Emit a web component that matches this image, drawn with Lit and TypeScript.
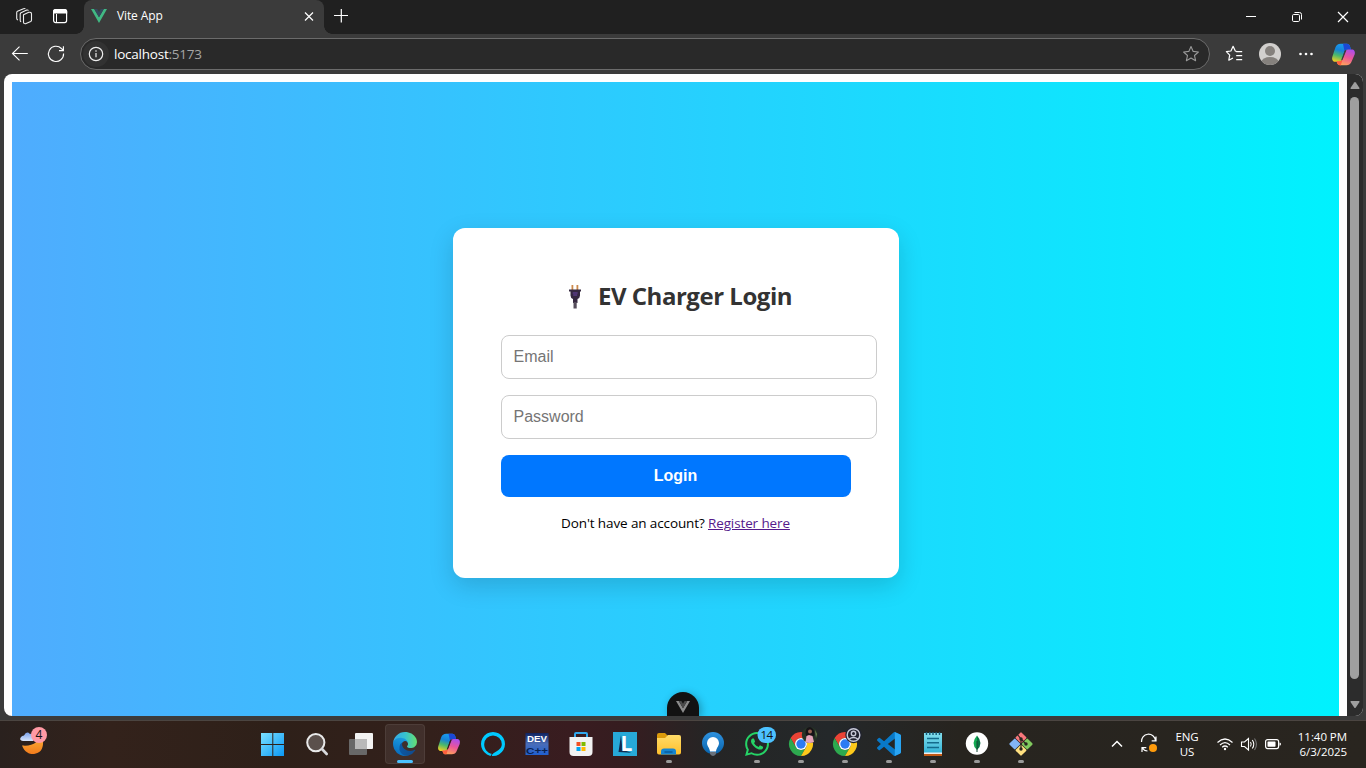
import { LitElement, html, css } from "lit";
import { customElement } from "lit/decorators.js";

const copilot = (size: number) => html`
  <svg width=${size} height=${size} viewBox="0 0 24 24"><g mask="url(#cpHole)">
    <path d="M9.2 1.800h6.100c1.500 0 2.500.9 2.900 2.300l.9 3h-3.300c-1.700 0-2.600.8-3.100 2.500l-2 6.900c-.5 1.700-1.400 2.500-3 2.500H4.200C1.700 19 .5 17 1.300 14.200L4.100 5.600C5 3 6.800 1.800 9.200 1.800z" fill="url(#cpA)"/>
    <path d="M11.500 1.800h3.800c1.500 0 2.500.9 2.900 2.300l.9 3h-3.300c-1.400 0-2.300.6-2.800 1.700z" fill="#1b48d6"/>
    <path d="M14.800 22.200H8.700c-1.500 0-2.500-.9-2.900-2.300l-.5-1.500h2.900c1.700 0 2.600-.8 3.100-2.500l2.200-6.300c.5-1.700 1.400-2.500 3-2.500h3.300c2.500 0 3.700 2 2.900 4.800l-2.800 6.500c-.9 2.600-2.700 3.800-5.100 3.800z" fill="url(#cpB)"/>
    <path d="M11 17l-1.500 5.200h-.8c-1.500 0-2.500-.9-2.900-2.300l-.4-1.500h2.800c1.200 0 2.100-.5 2.800-1.400z" fill="#ff5f3c"/>
  </g></svg>`;

const chrome = html`
  <svg width="24" height="24" viewBox="8 12 24 24">
    <path d="M9.600 18A12 12 0 0 1 30.400 18H20A6 6 0 0 0 14.800 27z" fill="#ea4335"/>
    <path d="M9.600 18A12 12 0 0 0 20 36L25.200 27A6 6 0 0 1 14.800 27z" fill="#2da94f"/>
    <path d="M20 36A12 12 0 0 0 30.400 18H20A6 6 0 0 1 25.200 27z" fill="#fdc91b"/>
    <circle cx="20" cy="24" r="6" fill="#fff"/><circle cx="20" cy="24" r="4.700" fill="#2b7bf3"/>
  </svg>`;

@customElement("app-root")
export class AppRoot extends LitElement {
  static styles = css`
    :host { display: block; width: 1366px; height: 768px; overflow: hidden; font-family: "Open Sans", "Noto Sans", sans-serif; }
    * { box-sizing: border-box; }
    svg { display: block; flex: none; overflow: visible; }
    .defs { position: absolute; width: 0; height: 0; }
    .window { display: flex; flex-direction: column; height: 720px; background: #3b3b3b; }
    .tabs { display: flex; height: 34px; background: #202020; color: #fff; }
    .lead { width: 84px; background: radial-gradient(circle at 0 0, #202020 7.500px, #3b3b3b 8px) right bottom / 8px 8px no-repeat; }
    .tail { width: 34px; background: radial-gradient(circle at 100% 0, #202020 7.500px, #3b3b3b 8px) left bottom / 8px 8px no-repeat; padding: 9px 0 0 10px; }
    .tools { display: flex; gap: 20px; padding: 8px 0 0 16px; }
    .tab { display: flex; align-items: center; width: 240px; height: 34px; border-radius: 8px 8px 0 0; background: #3b3b3b; padding: 0 10px 2px 7px; }
    .tab-title { flex: 1; margin-left: 10px; padding-bottom: 1px; font-size: 12px; letter-spacing: -0.120px; }
    .win-buttons { display: flex; margin-left: auto; }
    .win-buttons svg { width: 46px; height: 34px; }
    .toolbar { display: flex; align-items: center; height: 40px; padding-left: 10px; }
    .nav { display: flex; gap: 16px; width: 70px; }
    .address { display: flex; align-items: center; width: 1130px; height: 32px; border: 1px solid #6b6b6b; border-radius: 16px; background: #292929; padding: 0 10px 0 2px; }
    .info { display: flex; align-items: center; justify-content: center; width: 26px; height: 26px; border-radius: 13px; background: #323232; }
    .url { flex: 1; margin-left: 5px; font-size: 13.500px; letter-spacing: -0.230px; color: #fff; }
    .port { color: #a5a5a5; }
    .actions { display: flex; align-items: center; gap: 14px; margin-left: 13px; }
    .content { display: flex; height: 642px; margin: 0 3px 0 4px; border-radius: 8px; overflow: hidden; background: #fff; }
    .page { position: relative; width: 1343px; padding: 8px 8px 0; }
    .gradient { display: flex; justify-content: center; height: 634px; padding-top: 146px; background: linear-gradient(to right, #4facfe, #00f2fe); }
    .card { width: 446px; height: 350px; padding: 48px; border-radius: 12px; background: #fff; box-shadow: 0 8px 24px rgba(0, 0, 0, 0.15); }
    .heading { display: flex; align-items: center; justify-content: center; gap: 13px; height: 42px; margin: 0 0 17px; padding-left: 6px; font-size: 24px; font-weight: 700; letter-spacing: -0.470px; white-space: nowrap; color: #333; }
    .heading-text { padding-bottom: 3px; }
    .field { display: block; width: 376px; height: 44px; margin: 0 0 16px; padding: 0 12px; border: 1px solid #ccc; border-radius: 8px; background: #fff; font: 16px "Liberation Sans", sans-serif; outline: none; }
    .field::placeholder { color: #757575; opacity: 1; }
    .login { display: block; width: 350px; height: 42px; padding: 0; border: 0; border-radius: 8px; background: #0077ff; color: #fff; font: bold 16px "Liberation Sans", sans-serif; }
    .register { margin: 16px 0 0; text-align: center; font-size: 13.500px; line-height: 20px; letter-spacing: -0.120px; white-space: nowrap; color: #000; }
    .link { color: #551a8b; text-decoration: underline; }
    .devtools { position: absolute; left: 663px; bottom: 0; display: flex; justify-content: center; width: 32px; height: 24px; padding-top: 9px; border-radius: 16px 16px 0 0; background: #121212; box-shadow: 2px 2px 8px rgba(0, 0, 0, 0.3); }
    .scroll { display: flex; flex-direction: column; align-items: center; justify-content: space-between; width: 16px; padding: 8px 1px 8px 0; background: #2c2c2c; }
    .thumb { width: 9px; height: 582px; border-radius: 5px; background: #9f9f9f; margin: 0 0 14px; }
    .taskbar { display: flex; height: 48px; border-top: 1px solid #4b4541; background: linear-gradient(90deg, #2a211e 0, #33221b 110px, #2e2019 280px, #33201b 430px, #391c20 570px, #351d20 630px, #252525 710px, #24282a 830px, #27241f 960px, #29251f 1366px); color: #fff; }
    .weather { width: 253px; margin-top: -1px; padding-left: 20px; }
    .apps { display: flex; gap: 4px; margin-top: -1px; }
    .app { display: flex; align-items: center; justify-content: center; width: 40px; height: 48px; }
    .active { height: 40px; margin-top: 4px; border-radius: 4px; border: 1px solid #ffffff12; background: #ffffff12; }
    .active svg { margin: -5px -1px; }
    .stack { display: grid; width: 40px; height: 48px; place-items: center; }
    .stack > svg { grid-area: 1 / 1; }
    .tray { display: flex; align-items: center; flex: 1; justify-content: flex-end; padding: 0 19px 1px 0; font-size: 11.500px; line-height: 15px; letter-spacing: -0.050px; }
    .lang { width: 30px; margin: 0 14px 0 14px; text-align: center; letter-spacing: -0.200px; }
    .status { display: flex; gap: 6px; }
    .clock { width: 60px; margin-left: 5px; text-align: right; white-space: nowrap; }
    .chev { margin-right: 17px; }
    .mini { font-family: "Open Sans", sans-serif; }
    .tight { font-family: "Liberation Sans", sans-serif; font-weight: 700; }
  `;

  private icon(body: unknown) {
    return html`<div class="app">${body}</div>`;
  }

  render() {
    return html`
      <svg class="defs"><defs>
        <mask id="cpHole" maskUnits="userSpaceOnUse" x="0" y="0" width="24" height="24"><path d="M0 0h24v24H0z" fill="#fff"/><path d="M13.300 7.800h1.500l-3.500 8.700q-.4 1-1.600 1z" fill="#000"/></mask>
        <linearGradient id="cpA" x1="0.500" y1="0" x2="0.200" y2="1"><stop offset="0" stop-color="#1a9cf0"/><stop offset=".35" stop-color="#1684d8"/><stop offset=".65" stop-color="#4cb96b"/><stop offset="1" stop-color="#f5cf21"/></linearGradient>
        <linearGradient id="cpB" x1="0.800" y1="0" x2="0.400" y2="1"><stop offset="0" stop-color="#a94df0"/><stop offset=".5" stop-color="#ea5599"/><stop offset="1" stop-color="#ffa05c"/></linearGradient>
        <linearGradient id="win" x1="0" y1="0" x2="1" y2="1"><stop offset="0" stop-color="#7be0ff"/><stop offset="1" stop-color="#0a98f5"/></linearGradient>
        <linearGradient id="edA"><stop offset="0" stop-color="#0c59a4"/><stop offset="1" stop-color="#114a8b"/></linearGradient>
        <linearGradient id="edB" x1="0.600" y1="0" x2="0.300" y2="1"><stop offset="0" stop-color="#1b9de2"/><stop offset="1" stop-color="#0669bb"/></linearGradient>
        <linearGradient id="edC"><stop offset="0" stop-color="#35a9e8"/><stop offset=".5" stop-color="#36c1d0"/><stop offset="1" stop-color="#66e070"/></linearGradient>
        <linearGradient id="moon" x2="0" y2="1"><stop offset="0" stop-color="#ffbd3c"/><stop offset="1" stop-color="#f27b1c"/></linearGradient>
        <linearGradient id="cloud" x2="0" y2="1"><stop offset="0" stop-color="#7ba2ec"/><stop offset="1" stop-color="#d9e6fb"/></linearGradient>
        <linearGradient id="folder" x2="0" y2="1"><stop offset="0" stop-color="#ffdb69"/><stop offset="1" stop-color="#ffbf2c"/></linearGradient>
        <linearGradient id="bulb" x2="0" y2="1"><stop offset="0" stop-color="#2f92df"/><stop offset="1" stop-color="#0864ad"/></linearGradient>
        <linearGradient id="note" x2="0" y2="1"><stop offset="0" stop-color="#83deed"/><stop offset="1" stop-color="#35b5d8"/></linearGradient>
        <linearGradient id="dev" x2="0" y2="1"><stop offset="0" stop-color="#10235f"/><stop offset=".5" stop-color="#4a6db8"/><stop offset="1" stop-color="#1f5fd0"/></linearGradient>
      </defs></svg>

      <div class="window">
        <div class="tabs">
          <div class="lead"><div class="tools">
            <svg width="16" height="16" viewBox="0 0 16 16" fill="none" stroke="#eee" stroke-width="1.100" stroke-linejoin="round"><path d="M7.500 6.700l5.300-2.400q2.700-.4 2.700 1.700v6q0 1-.8 1.400l-5.200 2.300q-2 .2-2-1.700zM5.200 13.800q-1-.3-1-1.600V6.200q0-1 .8-1.500l5.700-2.600q1.300-.3 1.800.4M2 12q-1.300-.3-1.300-1.700V4.700q0-1 .8-1.400L7.500.7q1.300-.4 1.900.3"/></svg>
            <svg width="16" height="16" viewBox="0 0 16 16"><rect x="1.600" y="1.600" width="13" height="13" rx="2" fill="none" stroke="#fff" stroke-width="1.200"/><path d="M1 5.500V3.500Q1 1 3.500 1h9Q15.200 1 15.200 3.500v2zM4 5v9.500h1V5z" fill="#fff"/></svg>
          </div></div>
          <div class="tab">
            <svg width="16" height="14" viewBox="0 0 16 14"><path d="M0 0h3.200L8 8.300 12.800 0H16L8 14z" fill="#41b883"/><path d="M3.200 0h3L8 3.100 9.800 0h3L8 8.300z" fill="#35495e"/></svg>
            <span class="tab-title">Vite App</span>
            <svg width="10" height="10" viewBox="0 0 10 10" stroke="#fff" stroke-width="1.200"><path d="M1 1.500l8 8M9 1.500l-8 8"/></svg>
          </div>
          <div class="tail"><svg width="14" height="14" viewBox="0 0 14 14" stroke="#fff" stroke-width="1.200"><path d="M0 6.500h14M7.300 0v13.500"/></svg></div>
          <div class="win-buttons">
            <svg viewBox="0 0 46 34"><path d="M18 16.500h10" stroke="#fff"/></svg>
            <svg viewBox="0 0 46 34" fill="none" stroke="#fff"><rect x="18.500" y="14.500" width="7" height="7" rx="1.200"/><path d="M20.500 12.500h5q2 0 2 2v5"/></svg>
            <svg viewBox="0 0 46 34" stroke="#fff" stroke-width="1.200"><path d="M18 12l10 10M28 12L18 22"/></svg>
          </div>
        </div>

        <div class="toolbar">
          <div class="nav">
            <svg width="20" height="20" viewBox="0 0 20 20" fill="none" stroke="#fff" stroke-width="1.100"><path d="M17.800 9.500H2.500M9.500 2.700L2.500 9.500l7 6.800"/></svg>
            <svg width="20" height="20" viewBox="0 0 20 20" fill="none" stroke="#fff" stroke-width="1.100"><path d="M17.600 9.500A7.600 7.600 0 1 1 15.400 4.500L17.400 6.400M17.400 2.200V6.600H13"/></svg>
          </div>
          <div class="address">
            <span class="info"><svg width="16" height="16" viewBox="0 0 16 16"><circle cx="8" cy="8" r="6.700" fill="none" stroke="#eee" stroke-width="1.200"/><path d="M8 7v4.200" stroke="#eee" stroke-width="1.200"/><circle cx="8" cy="5" r=".8" fill="#eee"/></svg></span>
            <span class="url">localhost<span class="port">:5173</span></span>
            <svg width="16" height="16" viewBox="0 0 16 16" fill="none" stroke="#999" stroke-width="1.100" stroke-linejoin="round"><path d="M8 .6l2.200 4.800 5.200.6-3.900 3.500 1.100 5.200L8 12.100l-4.600 2.600 1.100-5.200L.6 6l5.200-.6z"/></svg>
          </div>
          <div class="actions">
            <svg width="22" height="20" viewBox="0 0 22 20" fill="none" stroke="#fff" stroke-width="1.200" stroke-linejoin="round"><path d="M13.500 7.500L12.300 7 10.100 2.300 7.900 7 3.400 7.700 6.700 11.100 5.800 16.200 10 14M13.200 7.600h6M13.200 11.600h6M13.200 15.600h6"/></svg>
            <svg width="22" height="22" viewBox="0 0 22 22"><circle cx="11" cy="11" r="11" fill="#d2d0ce"/><clipPath id="av"><circle cx="11" cy="11" r="11"/></clipPath><circle cx="11" cy="8" r="5" fill="#85817d"/><ellipse cx="11" cy="19" rx="8.500" ry="5" fill="#85817d" clip-path="url(#av)"/></svg>
            <svg width="22" height="20" viewBox="0 0 22 20" fill="#fff"><circle cx="5.500" cy="10" r="1.300"/><circle cx="11" cy="10" r="1.300"/><circle cx="16.500" cy="10" r="1.300"/></svg>
            ${copilot(25)}
          </div>
        </div>

        <div class="content">
          <div class="page">
            <div class="gradient">
              <div class="card">
                <h2 class="heading">
                  <svg width="20" height="24" viewBox="0 0 20 24"><path d="M6.500 0h1.800v5H6.500zM11.500 0h1.800v5h-1.800z" fill="#cc8a4d"/><path d="M4 4.500h12v2h-1v4q0 2.500-2.500 3.500v4H8v-4q-2.500-1-2.500-3.500v-4H4z" fill="#35283f"/><path d="M8.500 17h3.200v6.500H8.500z" fill="#554d5b"/><path d="M7.700 8h5M8.200 10h4" stroke="#6c45a8"/></svg>
                  <span class="heading-text">EV Charger Login</span>
                </h2>
                <input class="field" type="email" placeholder="Email">
                <input class="field" type="password" placeholder="Password">
                <button class="login">Login</button>
                <p class="register">Don't have an account? <a class="link">Register here</a></p>
              </div>
            </div>
            <div class="devtools"><svg width="14" height="12" viewBox="0 0 14 12"><path d="M0 0h2.800L7 7.200 11.200 0H14L7 12z" fill="#8c8c8c"/><path d="M2.800 0h2.600L7 2.700 8.600 0h2.600L7 7.200z" fill="#4b4b4b"/></svg></div>
          </div>
          <div class="scroll">
            <svg width="10" height="7" viewBox="0 0 10 7"><path d="M4.200.5q.8-1 1.600 0L9.500 6q.3 1-.7 1H1.200q-1 0-.7-1z" fill="#9f9f9f"/></svg>
            <div class="thumb"></div>
            <svg width="10" height="7" viewBox="0 0 10 7"><path d="M4.200 6.500q.8 1 1.600 0L9.500 1q.3-1-.7-1H1.200q-1 0-.7 1z" fill="#9f9f9f"/></svg>
          </div>
        </div>
      </div>

      <div class="taskbar">
        <div class="weather"><svg width="30" height="48" viewBox="0 0 30 48">
          <path d="M20 13c0 9-7 13.500-18 12.500C5 34 12 34.500 15 33.800 22 32.500 23.500 27 23 20z" fill="url(#moon)"/><path d="M3 21q-4.500-1-2-4 1-1.500 3-1.500 2.500-5 6-1.500 4-1 4 3.500l-1 3.500z" fill="url(#cloud)"/>
          <circle cx="19" cy="15" r="8" fill="#ff99a4"/><text class="mini" x="19" y="19.200" text-anchor="middle" font-size="12" fill="#111">4</text></svg></div>
        <div class="apps">
          ${this.icon(html`<svg width="40" height="48" viewBox="0 0 40 48"><path d="M8 13h11.300v11H8zM20.300 13H31v11H20.300zM8 25h11.300v11H8zM20.300 25H31v11H20.300z" fill="url(#win)"/></svg>`)}
          ${this.icon(html`<svg width="40" height="48" viewBox="0 0 40 48"><circle cx="18.800" cy="22.600" r="8.600" fill="#5b504c" stroke="#e9e9e9" stroke-width="2"/><path d="M25 29l4.700 5" stroke="#d9dadd" stroke-width="2.600" stroke-linecap="round"/></svg>`)}
          ${this.icon(html`<svg width="40" height="48" viewBox="0 0 40 48"><rect x="14" y="13" width="18" height="16" rx="1" fill="#f3f3f3"/><rect x="8" y="19" width="18" height="16" rx="1" fill="#686868"/><path d="M14 19h12v10H14z" fill="#b9b9b9"/></svg>`)}
          <div class="app active"><svg width="40" height="48" viewBox="0 0 40 48"><g transform="translate(8 12) scale(.09375)">
            <path d="M231 190.500c-3.400 1.800-6.900 3.400-10.500 4.700a101.700 101.700 0 0 1-35.900 6.500c-47.300 0-88.500-32.500-88.500-74.300a31.500 31.500 0 0 1 16.400-27.300c-42.800 1.800-53.800 46.400-53.800 72.500 0 74 68.100 81.400 82.800 81.400 7.900 0 19.800-2.300 27-4.600l1.300-.4a128.300 128.300 0 0 0 66.600-52.800 4 4 0 0 0-5.400-5.700z" fill="url(#edA)"/>
            <path d="M105.700 241.400a79.200 79.200 0 0 1-22.700-21.300 80.700 80.700 0 0 1 29.500-120c3.200-1.500 8.500-4.100 15.600-4a32.400 32.400 0 0 1 25.700 13 31.900 31.900 0 0 1 6.300 18.700c0-.2 24.500-79.600-80-79.600-43.900 0-80 41.600-80 78.200a130.200 130.200 0 0 0 12.100 56 128 128 0 0 0 156.400 67 75.500 75.500 0 0 1-62.800-8z" fill="url(#edB)"/>
            <path d="M152.300 148.900c-.9 1-3.400 2.500-3.400 5.600 0 2.600 1.700 5.200 4.800 7.300 14.300 10 41.400 8.600 41.500 8.600a59.600 59.600 0 0 0 30.300-8.300 61.400 61.400 0 0 0 30.400-52.900c.3-22.400-8-37.300-11.300-43.900C223.500 23.900 177.700 0 128 0A128 128 0 0 0 0 126.200c.5-36.500 36.800-66 80-66 3.500 0 23.500.3 42 10a72.600 72.600 0 0 1 30.900 29.300c6.100 10.600 7.200 24.100 7.200 29.500s-2.700 13.300-7.800 19.900z" fill="url(#edC)"/></g>
            <rect x="12" y="40" width="16" height="3" rx="1.500" fill="#4cc2ff"/></svg></div>
          ${this.icon(copilot(24))}
          ${this.icon(html`<svg width="40" height="48" viewBox="0 0 40 48"><path fill-rule="evenodd" d="M20 12a12 12 0 1 1-.01 0zM19.300 34c-5.400-1.200-8.100-5.300-8.100-9.800a8.800 8.800 0 0 1 17.600 0c0 4.800-5.400 7.200-9.500 9.800z" fill="#00caff"/><path d="M18.800 36.500q-.3-2 1.500-3l-1-.8-1.500 3z" fill="#351d1e"/></svg>`)}
          ${this.icon(html`<svg width="40" height="48" viewBox="0 0 40 48"><rect x="8.500" y="13" width="23" height="22" fill="url(#dev)"/><text class="tight" x="10" y="22" font-size="9.500" textLength="20" lengthAdjust="spacingAndGlyphs" fill="#fff">DEV</text><text class="tight" x="9" y="33.500" font-size="9.500" textLength="22" lengthAdjust="spacingAndGlyphs" fill="#08214f">C++</text></svg>`)}
          ${this.icon(html`<svg width="40" height="48" viewBox="0 0 40 48"><path d="M14 18v-4q0-1 1-1h10q1 0 1 1v4" fill="none" stroke="#31a8ed" stroke-width="2"/><path d="M8.500 17h23v15q0 4-4 4h-15q-4 0-4-4z" fill="#f2f2f2"/><path d="M15.500 22H19.500v4H15.500z" fill="#f25022"/><path d="M20.500 22H24.500v4H20.500z" fill="#7fba00"/><path d="M15.500 27H19.500v4H15.500z" fill="#00a4ef"/><path d="M20.500 27H24.500v4H20.500z" fill="#ffb900"/></svg>`)}
          ${this.icon(html`<svg width="40" height="48" viewBox="0 0 40 48"><path d="M8 12h24v24H8z" fill="#27a9d8"/><path d="M16 15l-2.500 17 13 .8-9-3z" fill="#102a50"/><text class="mini" x="15.500" y="31" font-size="21" font-weight="700" fill="#fff">L</text></svg>`)}
          ${this.icon(html`<svg width="40" height="48" viewBox="0 0 40 48"><path d="M8 18v-3q0-2 2-2h6l3 3v3z" fill="#dc9a0b"/><path d="M8 18h8l3-3h11q2 0 2 2v15.500q0 2-2 2H10q-2 0-2-2z" fill="url(#folder)"/><path d="M12 34.500v-3q0-3 3-3h9q3 0 3 3v3z" fill="#1685d1"/><path d="M16 32h7" stroke="#0b5b9c" stroke-width="1.500" stroke-linecap="round"/><rect x="17" y="40" width="6" height="3" rx="1.500" fill="#9a9a9a"/></svg>`)}
          ${this.icon(html`<svg width="40" height="48" viewBox="0 0 40 48"><circle cx="20" cy="23" r="11" fill="url(#bulb)"/><path d="M20 17a6.200 6.200 0 0 0-6 6c0 3 2.500 4.500 3 8.500h6c.5-4 3-5.500 3-8.500a6.200 6.200 0 0 0-6-6z" fill="#fff"/><path d="M17 32h6v2q-3 4-6 0z" fill="#68717b"/></svg>`)}
          ${this.icon(html`<svg width="40" height="48" viewBox="0 0 40 48"><path transform="translate(8 12)" d="M17.472 14.382c-.297-.149-1.758-.867-2.030-.967-.273-.099-.471-.148-.67.15-.197.297-.767.966-.94 1.164-.173.199-.347.223-.644.075-.297-.15-1.255-.463-2.390-1.475-.883-.788-1.480-1.761-1.653-2.059-.173-.297-.018-.458.13-.606.134-.133.298-.347.446-.52.149-.174.198-.298.298-.497.099-.198.05-.371-.025-.52-.075-.149-.669-1.612-.916-2.207-.242-.579-.487-.5-.669-.51-.173-.008-.371-.01-.57-.01-.198 0-.52.074-.792.372-.272.297-1.040 1.016-1.040 2.479 0 1.462 1.065 2.875 1.213 3.074.149.198 2.096 3.200 5.077 4.487.709.306 1.262.489 1.694.625.712.227 1.360.195 1.871.118.571-.085 1.758-.719 2.006-1.413.248-.694.248-1.289.173-1.413-.074-.124-.272-.198-.57-.347m-5.421 7.403h-.004a9.870 9.870 0 01-5.031-1.378l-.361-.214-3.741.982.998-3.648-.235-.374a9.860 9.860 0 01-1.510-5.260c.001-5.450 4.436-9.884 9.888-9.884 2.640 0 5.122 1.030 6.988 2.898a9.825 9.825 0 012.893 6.994c-.003 5.450-4.437 9.884-9.885 9.884m8.413-18.297A11.815 11.815 0 0012.050 0C5.495 0 .16 5.335.157 11.892c0 2.096.547 4.142 1.588 5.945L.057 24l6.305-1.654a11.882 11.882 0 005.683 1.448h.005c6.554 0 11.890-5.335 11.893-11.893a11.821 11.821 0 00-3.480-8.413Z" fill="#25d366"/><rect x="20.500" y="7" width="18.500" height="16" rx="8" fill="#4cc2ff"/><text class="mini" x="29.500" y="19.200" text-anchor="middle" font-size="11.500" letter-spacing="-.5" fill="#111">14</text><rect x="17" y="40" width="6" height="3" rx="1.500" fill="#9a9a9a"/></svg>`)}
          <div class="stack">${chrome}<svg width="40" height="48" viewBox="0 0 40 48"><circle cx="28.800" cy="15" r="8" fill="#273326"/><path d="M24.500 13q0-6 4.500-6 4.500 1 4.500 8l-2 2h-6z" fill="#171317"/><path d="M25.500 16l2.500-1 3.500 1 1.500 6q-4.500 2-8.500 0z" fill="#e7a5ba"/><circle cx="29" cy="11.500" r="2" fill="#9a6352"/><path d="M34 10l2 4-1 4z" fill="#6b8450"/><rect x="17" y="40" width="6" height="3" rx="1.500" fill="#9a9a9a"/></svg></div>
          <div class="stack">${chrome}<svg width="40" height="48" viewBox="0 0 40 48"><circle cx="28.500" cy="15" r="8.200" fill="#202330"/><g fill="none" stroke="#c8cad8" stroke-width="1.400"><circle cx="28.500" cy="15" r="6.300"/><circle cx="28.500" cy="13.500" r="2.200"/><path d="M24.200 19q4.300-3 8.600 0"/></g><rect x="17" y="40" width="6" height="3" rx="1.500" fill="#9a9a9a"/></svg></div>
          ${this.icon(html`<svg width="40" height="48" viewBox="0 0 40 48"><g transform="translate(8 12)"><path d="M23.150 2.587L18.210.21a1.494 1.494 0 0 0-1.705.29l-9.460 8.630-4.120-3.128a.999.999 0 0 0-1.276.057L.327 7.261A1 1 0 0 0 .326 8.740L3.899 12 .326 15.260a1 1 0 0 0 .001 1.479L1.650 17.940a.999.999 0 0 0 1.276.057l4.120-3.128 9.460 8.630a1.492 1.492 0 0 0 1.704.29l4.942-2.377A1.500 1.500 0 0 0 24 20.060V3.939a1.500 1.500 0 0 0-.85-1.352zm-5.146 14.861L10.826 12l7.178-5.448v10.896z" fill="#0879c8"/><path d="M17.800.1l5.350 2.487A1.500 1.500 0 0 1 24 3.939V20.060a1.500 1.500 0 0 1-.85 1.350L17.800 23.900z" fill="#29a5f3"/></g><rect x="17" y="40" width="6" height="3" rx="1.500" fill="#9a9a9a"/></svg>`)}
          ${this.icon(html`<svg width="40" height="48" viewBox="0 0 40 48"><path d="M11 32h18v4H11z" fill="#c35a16"/><path d="M11 32h18v2H11z" fill="#eee"/><path d="M11 13h18v19.500H11z" fill="url(#note)"/><path d="M13.500 12v3M16.800 12v3M20 12v3M23.200 12v3M26.500 12v3" stroke="#155977" stroke-width="1.400"/><path d="M14 18.500h12M14 22.800h12M14 27.500h12" stroke="#146b8c" stroke-width="1.500"/><rect x="17" y="40" width="6" height="3" rx="1.500" fill="#9a9a9a"/></svg>`)}
          ${this.icon(html`<svg width="40" height="48" viewBox="0 0 40 48"><circle cx="20" cy="23.500" r="11.200" fill="#fff"/><path d="M20 15.500q-7 8 0 14.500z" fill="#13aa52"/><path d="M20 15.500q7 8 0 14.500z" fill="#087343"/><path d="M20 21v11" stroke="#164b36"/><rect x="17" y="40" width="6" height="3" rx="1.500" fill="#9a9a9a"/></svg>`)}
          ${this.icon(html`<svg width="40" height="48" viewBox="0 0 40 48"><g transform="translate(20 24) rotate(45)"><rect x="-8.500" y="-8.500" width="8.200" height="8.200" rx="1" fill="#f7777b"/><rect x=".3" y="-8.500" width="8.200" height="8.200" rx="1" fill="#80c95e"/><rect x="-8.500" y=".3" width="8.200" height="8.200" rx="1" fill="#82b4f7"/><rect x=".3" y=".3" width="8.200" height="8.200" rx="1" fill="#ffe080"/></g><path d="M16 14l4 5v11M20 19l5 5" fill="none" stroke="#28241f" stroke-width="1.200"/><circle cx="20" cy="19" r="1.700" fill="#28241f"/><circle cx="25" cy="24" r="1.700" fill="#28241f"/><circle cx="20" cy="29" r="1.700" fill="#28241f"/><rect x="17" y="40" width="6" height="3" rx="1.500" fill="#9a9a9a"/></svg>`)}
        </div>
        <div class="tray">
          <svg class="chev" width="12" height="12" viewBox="0 0 12 12" fill="none" stroke="#fff" stroke-width="1.500"><path d="M1 8.500l5-5 5 5"/></svg>
          <svg width="18" height="18" viewBox="0 0 18 18"><path d="M1.500 7A7 7 0 0 1 15.500 5.500M16 1.500v4.300h-4.300M2 17v-4.300h4.300M2.500 13Q4 15.800 7.500 16" fill="none" stroke="#fff" stroke-width="1.200"/><circle cx="13" cy="13" r="4" fill="#ff9b0b"/></svg>
          <div class="lang">ENG<br>US</div>
          <div class="status">
            <svg width="18" height="16" viewBox="0 0 18 16" fill="none" stroke="#fff" stroke-width="1.200"><path d="M1.500 6.500q7.500-7 15 0M4 9q5-4.700 10 0M6.200 11.300q2.800-2.600 5.600 0"/><circle cx="9" cy="13" r="1.200" fill="#fff" stroke="none"/></svg>
            <svg width="18" height="16" viewBox="0 0 18 16" fill="none" stroke="#fff" stroke-width="1.100"><path d="M1.500 6v4.500h3L8.500 14V2.500L4.500 6zM10.500 6q1.500 2.200 0 4.500M12.300 4q3 4.200 0 8.500"/><path d="M14.500 2.500q4 5.700 0 11.500" stroke="#777"/></svg>
            <svg width="18" height="16" viewBox="0 0 18 16"><rect x="1.600" y="3.600" width="13" height="9" rx="2" fill="none" stroke="#fff" stroke-width="1.200"/><rect x="3.500" y="5.500" width="8" height="5.200" rx=".6" fill="#fff"/><path d="M15.500 6.500q1.500 0 1.500 1.600t-1.500 1.600z" fill="#fff"/></svg>
          </div>
          <div class="clock">11:40 PM<br>6/3/2025</div>
        </div>
      </div>
    `;
  }
}
